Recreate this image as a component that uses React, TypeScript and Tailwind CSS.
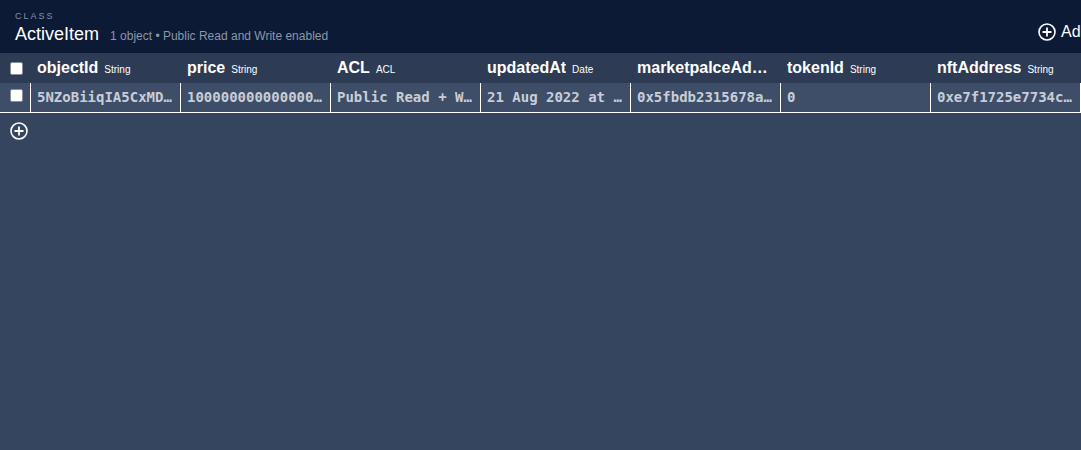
import React from 'react';

const columns: { name: string; type: string; value: string }[] = [
  { name: 'objectId', type: 'String', value: '5NZoBiiqIA5CxMDkR2aQ' },
  { name: 'price', type: 'String', value: '100000000000000000' },
  { name: 'ACL', type: 'ACL', value: 'Public Read + Write' },
  { name: 'updatedAt', type: 'Date', value: '21 Aug 2022 at 14:32:10 UTC' },
  { name: 'marketpalceAddress', type: 'String', value: '0x5fbdb2315678afecb367f032d93f642f64180aa3' },
  { name: 'tokenId', type: 'String', value: '0' },
  { name: 'nftAddress', type: 'String', value: '0xe7f1725e7734ce288f8367e1bb143e90bb3f0512' },
];

function Checkbox() {
  return <span className="block w-[13px] h-[13px] bg-white border border-[#8a8f99] rounded-[2px]" />;
}

function PlusCircle({ size = 18 }: { size?: number }) {
  return (
    <svg width={size} height={size} viewBox="0 0 18 18" fill="none" stroke="white" strokeWidth="1.6">
      <circle cx="9" cy="9" r="8" />
      <path d="M9 4.5v9M4.5 9h9" strokeWidth="1.8" />
    </svg>
  );
}

export default function App() {
  return (
    <div className="w-screen h-[450px] overflow-hidden bg-[#354560]" style={{ fontFamily: '"Liberation Sans", Arial, sans-serif' }}>
      <div className="w-[1141px]">
        {/* Toolbar */}
        <div className="h-[53px] bg-[#0c1a35] flex items-center pl-[15px] pr-[15px]">
          <div className="flex-1 pt-[2px]">
            <div className="text-[9px] tracking-[2px] text-[#8792a6] leading-[10px]">CLASS</div>
            <div className="flex items-baseline mt-[2px]">
              <span className="text-[18px] text-white leading-[22px]">ActiveItem</span>
              <span className="text-[12px] text-[#8d97a8] ml-[11px]">1 object • Public Read and Write enabled</span>
            </div>
          </div>
          <button className="flex items-center gap-[5px] mt-[11px] text-white text-[16px]">
            <PlusCircle />
            <span>Add Row</span>
          </button>
        </div>

        {/* Header row */}
        <div className="flex h-[30px] bg-[#2d3b54] items-center">
          <div className="w-[30px] shrink-0 flex pl-[10px]">
            <Checkbox />
          </div>
          {columns.map((c) => (
            <div key={c.name} className="w-[150px] shrink-0 pl-[7px] pr-[6px] flex items-baseline overflow-hidden whitespace-nowrap">
              <span className="text-[16px] font-bold text-white truncate">
                {c.name}
              </span>
              {c.name !== 'marketpalceAddress' && (
                <span className="text-[10px] text-white ml-[6px] shrink-0">{c.type}</span>
              )}
            </div>
          ))}
        </div>

        {/* Data row */}
        <div className="flex h-[30px] bg-[#3f4e68] border-b border-white">
          <div className="w-[31px] shrink-0 flex pl-[10px] pt-[6px] border-r border-white">
            <Checkbox />
          </div>
          {columns.map((c) => (
            <div
              key={c.name}
              className="w-[150px] shrink-0 pl-[6px] pr-[8px] border-r border-white flex items-center overflow-hidden"
            >
              <span
                className="block truncate text-[14px] font-bold text-[#c8ced8]"
                style={{ fontFamily: '"DejaVu Sans Mono", monospace' }}
              >
                {c.value}
              </span>
            </div>
          ))}
        </div>

        {/* Add row */}
        <div className="pl-[10px] pt-[9px]">
          <PlusCircle />
        </div>
      </div>
    </div>
  );
}
